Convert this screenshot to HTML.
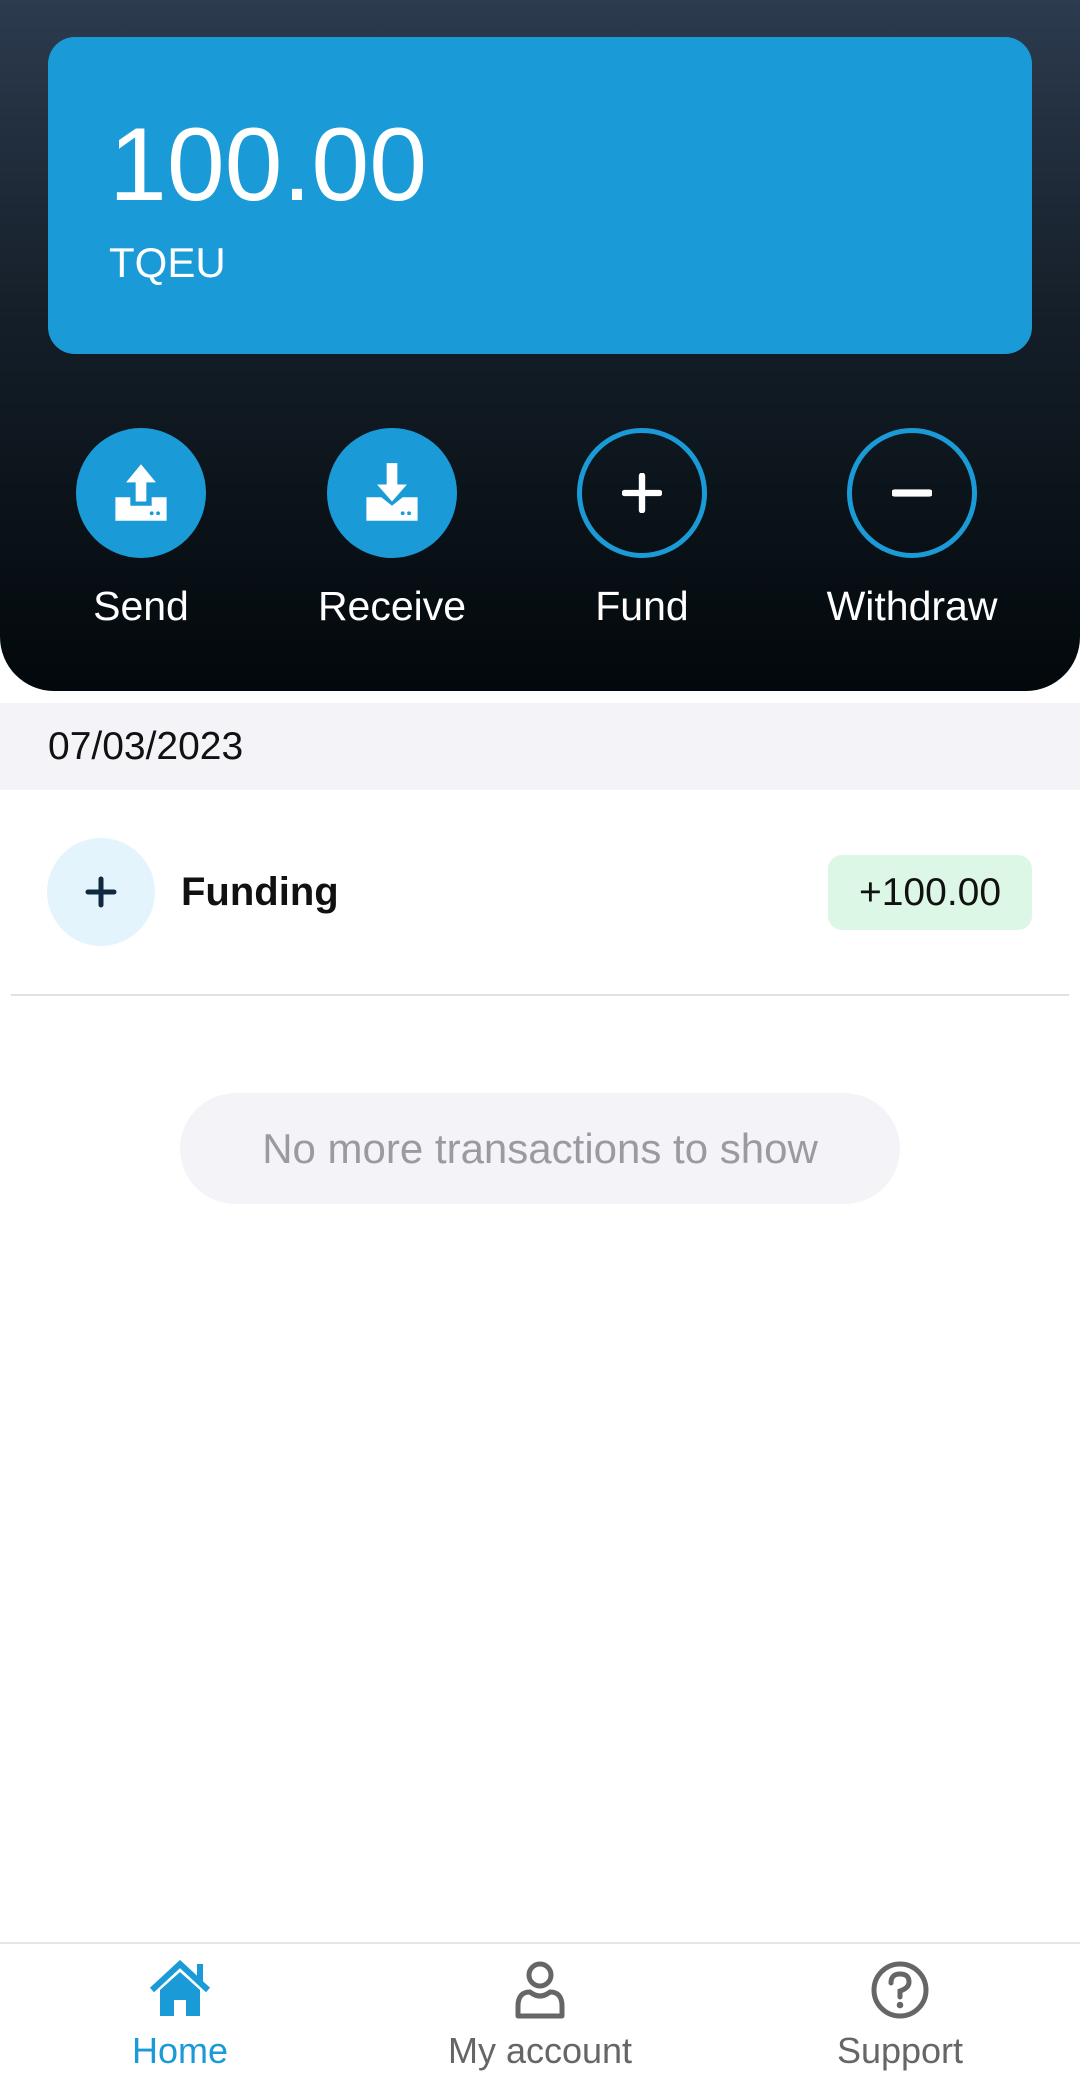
<!DOCTYPE html>
<html><head><meta charset="utf-8"><style>
*{margin:0;padding:0;box-sizing:border-box}
body{width:1080px;height:2087px;background:#fff;font-family:"Liberation Sans",sans-serif;position:relative;overflow:hidden}
.hdr{position:absolute;left:0;top:0;width:1080px;height:691px;background:linear-gradient(#2c3b4f,#151f29 45%,#02080b);border-radius:0 0 54px 54px}
.card{position:absolute;left:48px;top:37px;width:984px;height:317px;background:#1a9bd7;border-radius:27px}
.amt{position:absolute;left:109px;top:113px;font-size:104px;color:#fff;line-height:1}
.cur{position:absolute;left:109px;top:242px;font-size:42px;color:#fff;line-height:1}
.btn{position:absolute;top:428px;width:130px;height:130px;border-radius:50%;display:flex;align-items:center;justify-content:center}
.fill{background:#1a9bd7}
.ring{border:5px solid #1a9bd7}
.lbl{position:absolute;top:583px;width:260px;text-align:center;color:#fff;font-size:41px}
.date{position:absolute;left:0;top:703px;width:1080px;height:87px;background:#f4f4f8;font-size:39px;color:#111;padding-left:48px;line-height:87px}
.fc{position:absolute;left:47px;top:838px;width:108px;height:108px;border-radius:50%;background:#e4f4fc;display:flex;align-items:center;justify-content:center}
.fund{position:absolute;left:181px;top:870px;font-size:40px;font-weight:bold;color:#111}
.badge{position:absolute;left:828px;top:855px;width:204px;height:75px;background:#dcf7e5;border-radius:14px;font-size:39px;color:#111;text-align:center;line-height:75px}
.sep{position:absolute;left:11px;top:994px;width:1058px;height:2px;background:#e2e2e6}
.pill{position:absolute;left:180px;top:1093px;width:720px;height:111px;border-radius:56px;background:#f4f4f8;color:#9a9aa2;font-size:42px;text-align:center;line-height:111px}
.nav{position:absolute;left:0;top:1942px;width:1080px;height:2px;background:#e6e6e6}
.ni{position:absolute;top:1960px;width:260px;display:flex;justify-content:center}
.nl{position:absolute;top:2030px;width:300px;text-align:center;font-size:36px;color:#666}
</style></head><body>
<div class="hdr"></div>
<div class="card"></div>
<div class="amt">100.00</div>
<div class="cur">TQEU</div>

<div class="btn fill" style="left:76px"><svg width="64" height="64" viewBox="0 0 60 60"><path d="M30 3 L44 20 H35 V38 H25 V20 H16 Z" fill="#fff"/><path d="M6 34 H20 V42 H40 V34 H54 V56 H6 Z" fill="#fff"/><circle cx="40" cy="49" r="1.8" fill="#1a9bd7"/><circle cx="46" cy="49" r="1.8" fill="#1a9bd7"/></svg></div>
<div class="btn fill" style="left:327px"><svg width="64" height="64" viewBox="0 0 60 60"><path d="M25 2 H35 V22 H44 L30 38 L16 22 H25 Z" fill="#fff"/><path d="M6 34 H20 L30 42 L40 34 H54 V56 H6 Z" fill="#fff"/><circle cx="40" cy="49" r="1.8" fill="#1a9bd7"/><circle cx="46" cy="49" r="1.8" fill="#1a9bd7"/></svg></div>
<div class="btn ring" style="left:577px"><svg width="40" height="40" viewBox="0 0 44 44"><path d="M22 3 V41 M3 22 H41" stroke="#fff" stroke-width="7" stroke-linecap="round"/></svg></div>
<div class="btn ring" style="left:847px"><svg width="40" height="40" viewBox="0 0 44 44"><path d="M3 22 H41" stroke="#fff" stroke-width="8" stroke-linecap="round"/></svg></div>

<div class="lbl" style="left:11px">Send</div>
<div class="lbl" style="left:262px">Receive</div>
<div class="lbl" style="left:512px">Fund</div>
<div class="lbl" style="left:782px">Withdraw</div>

<div class="date">07/03/2023</div>
<div class="fc"><svg width="32" height="32" viewBox="0 0 32 32"><path d="M16 3 V29 M3 16 H29" stroke="#0e2a40" stroke-width="5" stroke-linecap="round"/></svg></div>
<div class="fund">Funding</div>
<div class="badge">+100.00</div>
<div class="sep"></div>
<div class="pill">No more transactions to show</div>

<div class="nav"></div>
<div class="ni" style="left:50px"><svg width="64" height="58" viewBox="0 0 64 58"><path d="M4 30 L32 4 L60 30" stroke="#1a9bd7" stroke-width="6" fill="none" stroke-linejoin="miter"/><path d="M52 4 V22" stroke="#1a9bd7" stroke-width="6"/><path d="M12 30 L32 12 L52 30 V56 H38 V40 H26 V56 H12 Z" fill="#1a9bd7"/></svg></div>
<div class="ni" style="left:410px"><svg width="56" height="60" viewBox="0 0 56 60"><circle cx="28" cy="15" r="11" stroke="#666" stroke-width="5" fill="none"/><path d="M6 56 V46 Q6 32 18 32 Q28 40 38 32 Q50 32 50 46 V56 Z" stroke="#666" stroke-width="5" fill="none" stroke-linejoin="round"/></svg></div>
<div class="ni" style="left:770px"><svg width="60" height="60" viewBox="0 0 60 60"><circle cx="30" cy="30" r="26" stroke="#666" stroke-width="5" fill="none"/><path d="M21 23 Q21 14 30 14 Q39 14 39 22 Q39 28 30 31 V37" stroke="#666" stroke-width="5" fill="none" stroke-linecap="round"/><circle cx="30" cy="45" r="3.3" fill="#666"/></svg></div>
<div class="nl" style="left:30px;color:#1a9bd7">Home</div>
<div class="nl" style="left:390px">My account</div>
<div class="nl" style="left:750px">Support</div>
</body></html>
